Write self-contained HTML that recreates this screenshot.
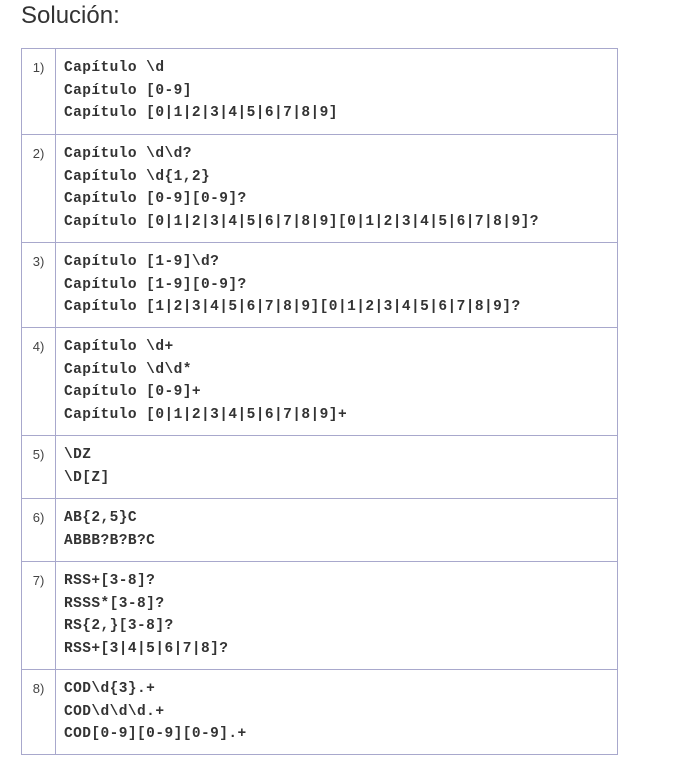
<!DOCTYPE html>
<html><head><meta charset="utf-8"><style>
body{margin:0;background:#fff;width:681px;height:771px;overflow:hidden;font-family:"Liberation Sans",sans-serif}
h1{position:absolute;left:21px;top:2px;margin:0;font-size:24px;font-weight:normal;color:#333}
table{position:absolute;left:21px;top:48px;width:597px;border-collapse:collapse}
td{border:1px solid #a8a8cc;vertical-align:top;padding:8px 0 8px 0}
td.n{width:33px;font-size:13px;color:#444;text-align:center;padding-top:9px;line-height:20px}
td.c{padding-left:8px;font-family:"Liberation Mono",monospace;font-weight:bold;font-size:14.5px;letter-spacing:0.43px;line-height:22.5px;color:#333;white-space:pre}
</style></head><body>
<h1>Solución:</h1>
<table>
<tr style="height:86px"><td class="n">1)</td><td class="c">Capítulo \d
Capítulo [0-9]
Capítulo [0|1|2|3|4|5|6|7|8|9]</td></tr>
<tr style="height:108px"><td class="n">2)</td><td class="c">Capítulo \d\d?
Capítulo \d{1,2}
Capítulo [0-9][0-9]?
Capítulo [0|1|2|3|4|5|6|7|8|9][0|1|2|3|4|5|6|7|8|9]?</td></tr>
<tr style="height:85px"><td class="n">3)</td><td class="c">Capítulo [1-9]\d?
Capítulo [1-9][0-9]?
Capítulo [1|2|3|4|5|6|7|8|9][0|1|2|3|4|5|6|7|8|9]?</td></tr>
<tr style="height:108px"><td class="n">4)</td><td class="c">Capítulo \d+
Capítulo \d\d*
Capítulo [0-9]+
Capítulo [0|1|2|3|4|5|6|7|8|9]+</td></tr>
<tr style="height:63px"><td class="n">5)</td><td class="c">\DZ
\D[Z]</td></tr>
<tr style="height:63px"><td class="n">6)</td><td class="c">AB{2,5}C
ABBB?B?B?C</td></tr>
<tr style="height:108px"><td class="n">7)</td><td class="c">RSS+[3-8]?
RSSS*[3-8]?
RS{2,}[3-8]?
RSS+[3|4|5|6|7|8]?</td></tr>
<tr style="height:84px"><td class="n">8)</td><td class="c">COD\d{3}.+
COD\d\d\d.+
COD[0-9][0-9][0-9].+</td></tr>
</table>
</body></html>
